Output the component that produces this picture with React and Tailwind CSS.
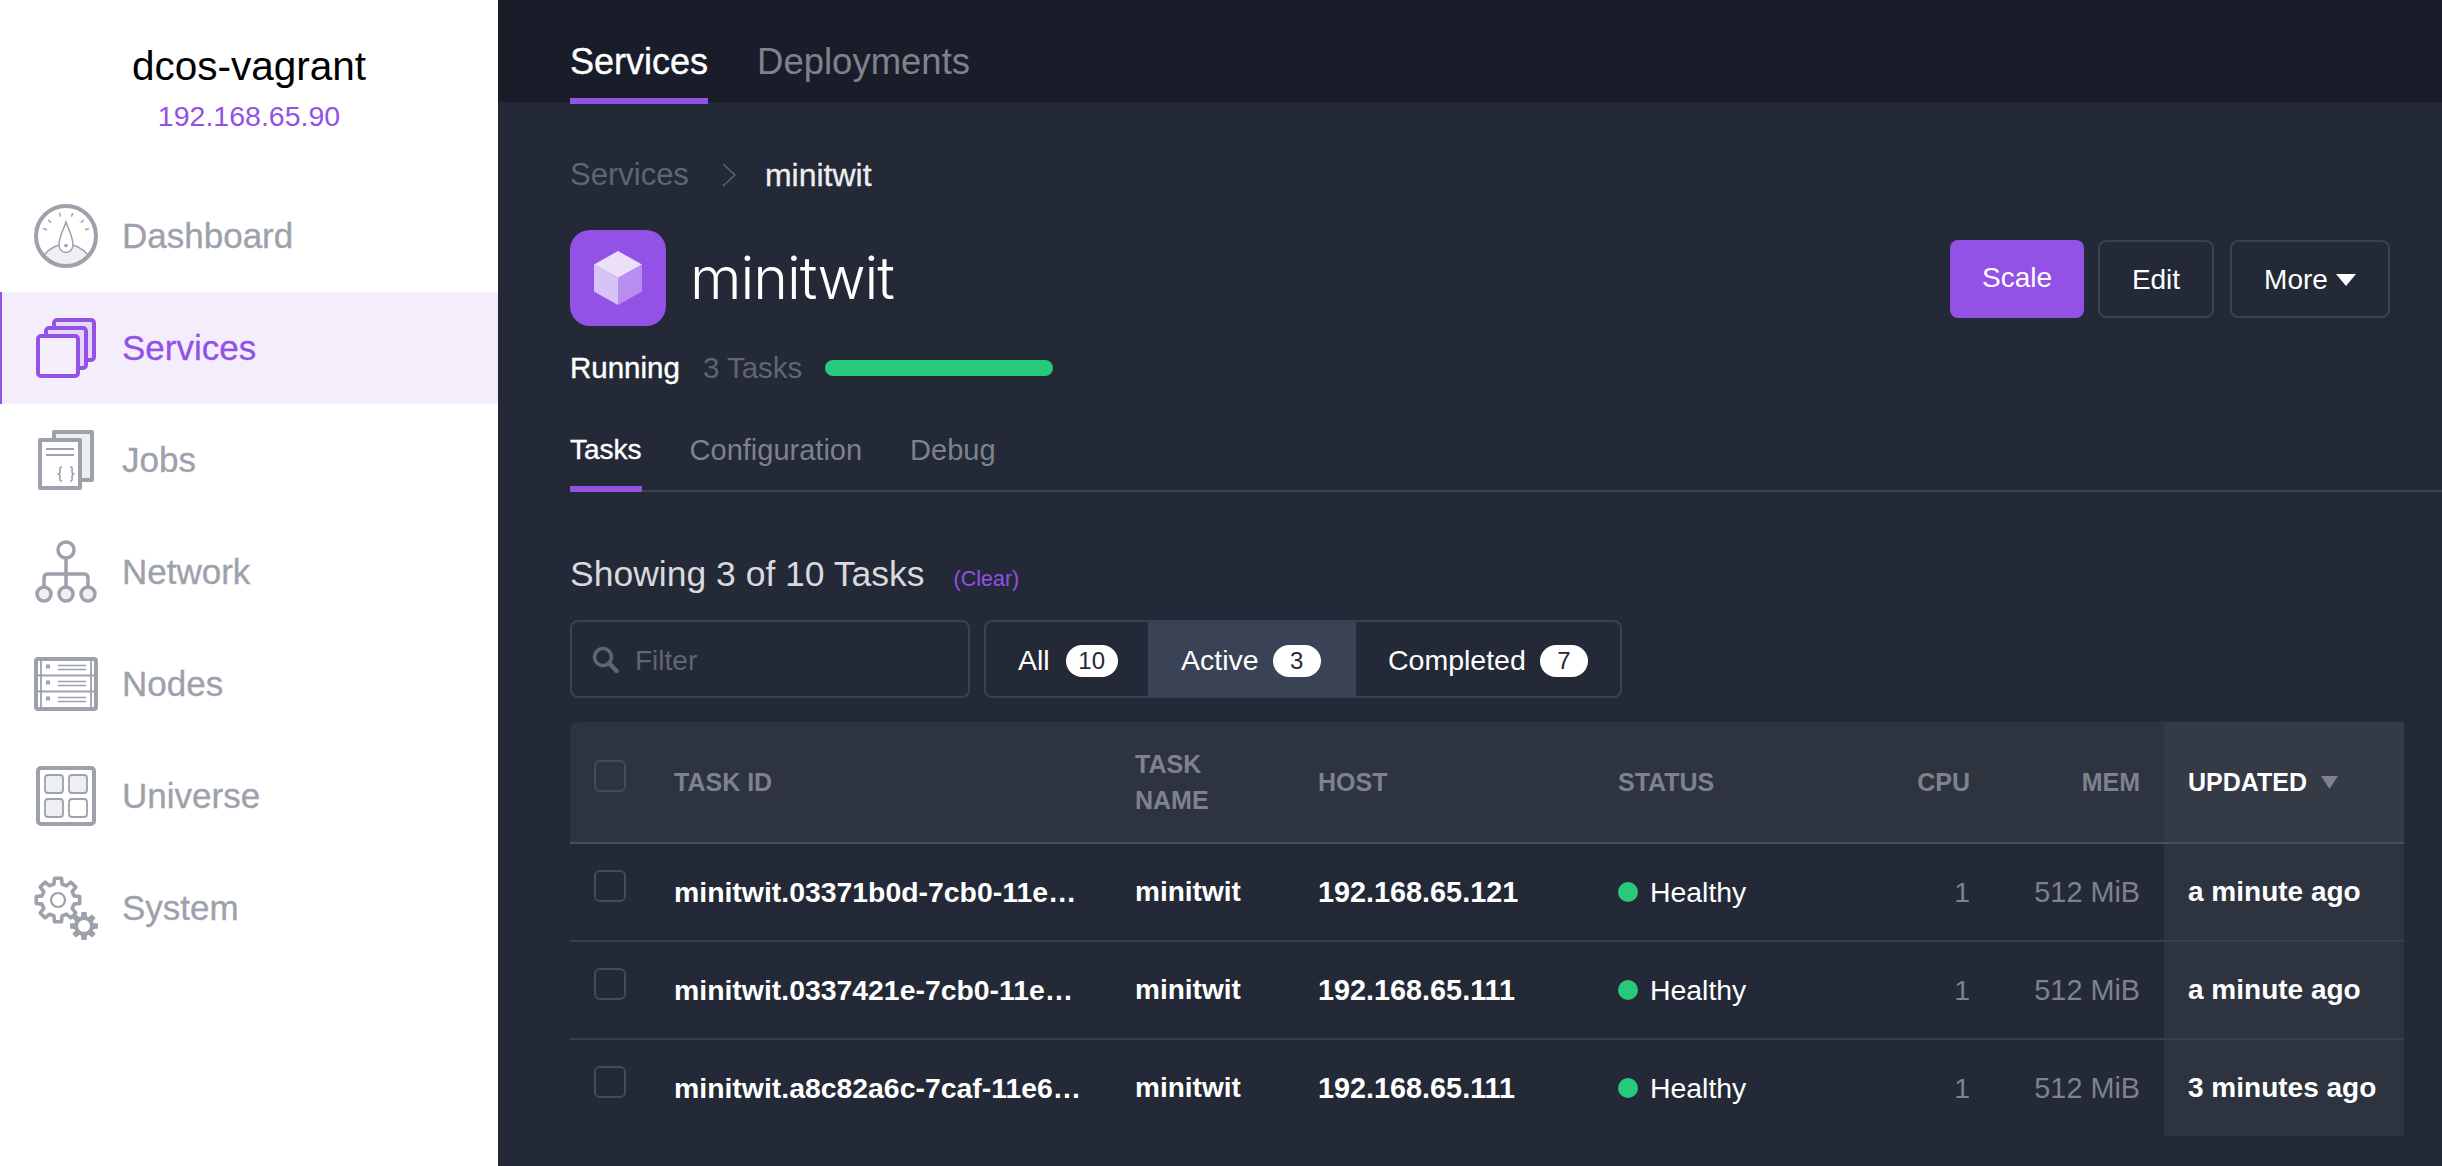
const gearPath = (cx, cy, teeth, outer, root) => {
  const step = (Math.PI * 2) / teeth
  const pts = []
  for (let i = 0; i < teeth; i++) {
    const a = i * step - Math.PI / 2
    const at = (r, d) => `${(cx + r * Math.cos(a + d * step)).toFixed(2)} ${(cy + r * Math.sin(a + d * step)).toFixed(2)}`
    pts.push(at(root, -0.32), at(outer, -0.2), at(outer, 0.2), at(root, 0.32))
  }
  return 'M' + pts.join('L') + 'Z'
}

const GRAY = '#9da1ab'
const LIGHT = '#eff0f2'
const PURPLE = '#9351e5'

function DashboardIcon() {
  const ticks = [-72, -48, -16, 16, 48, 72]
  return (
    <svg width="64" height="64" viewBox="0 0 64 64" fill="none">
      <path d="M10 51 C16 44 24 40 32 40 C40 40 48 44 54 51 A28 28 0 0 1 10 51Z" fill={LIGHT} stroke={GRAY} strokeWidth="1.5" />
      <circle cx="32" cy="32" r="30" stroke={GRAY} strokeWidth="4" />
      {ticks.map((a) => (
        <line key={a} x1="32" y1="8" x2="32" y2="12" stroke={GRAY} strokeWidth="1.5" transform={`rotate(${a} 32 32)`} />
      ))}
      <path d="M32 18 C29 27 25 33 25 41 A7 7.5 0 0 0 39 41 C39 33 35 27 32 18Z" fill="#fff" stroke={GRAY} strokeWidth="1.5" />
      <circle cx="32" cy="41.5" r="1.8" fill={GRAY} />
    </svg>
  )
}

function ServicesIcon() {
  return (
    <svg width="64" height="64" viewBox="0 0 64 64" fill="none" stroke={PURPLE} strokeWidth="4">
      <rect x="20" y="4" width="40" height="40" rx="3" fill="#e4d6f8" />
      <rect x="12" y="12" width="40" height="40" rx="3" fill="#e4d6f8" />
      <rect x="4" y="20" width="40" height="40" rx="3" fill="#f4eefc" />
    </svg>
  )
}

function JobsIcon() {
  return (
    <svg width="64" height="64" viewBox="0 0 64 64" fill="none" stroke={GRAY} strokeLinejoin="round">
      <rect x="20" y="4" width="38" height="48" strokeWidth="4" fill="#eceef0" />
      <rect x="6" y="12" width="40" height="48" strokeWidth="4" fill="#fff" />
      <path d="M12 21H40M12 27H40" strokeWidth="1.8" />
      <path d="M28 39C25 39 26 41 26 43C26 45 25 46 24 46C25 46 26 47 26 49C26 51 25 53 28 53M36 39C39 39 38 41 38 43C38 45 39 46 40 46C39 46 38 47 38 49C38 51 39 53 36 53" strokeWidth="1.6" />
    </svg>
  )
}

function NetworkIcon() {
  return (
    <svg width="64" height="64" viewBox="0 0 64 64" fill="none" stroke={GRAY} strokeWidth="3.5">
      <circle cx="32" cy="10" r="8" />
      <path d="M32 18V46M10 47V38Q10 34 14 34H50Q54 34 54 38V47" />
      <circle cx="10" cy="54" r="7" fill={LIGHT} />
      <circle cx="32" cy="54" r="7" fill={LIGHT} />
      <circle cx="54" cy="54" r="7" fill={LIGHT} />
    </svg>
  )
}

function NodesIcon() {
  return (
    <svg width="64" height="64" viewBox="0 0 64 64" fill="none" stroke={GRAY}>
      <rect x="2" y="7" width="60" height="50" rx="2" strokeWidth="4" fill="#fff" />
      <path d="M7 7V57M57 7V57M4 23.5H60M4 39.5H60" strokeWidth="1.8" />
      {[0, 16, 32].map((dy) => (
        <g key={dy}>
          <rect x="12" y={12.5 + dy} width="4" height="4" fill={GRAY} stroke="none" />
          <path d={`M24 ${13.5 + dy}H52M24 ${17.5 + dy}H52`} strokeWidth="1.6" />
        </g>
      ))}
    </svg>
  )
}

function UniverseIcon() {
  return (
    <svg width="64" height="64" viewBox="0 0 64 64" fill="none" stroke={GRAY}>
      <rect x="4" y="4" width="56" height="56" rx="3" strokeWidth="4" fill="#fff" />
      <rect x="11" y="11" width="18" height="18" rx="3" strokeWidth="1.8" fill={LIGHT} />
      <rect x="35" y="11" width="18" height="18" rx="3" strokeWidth="1.8" fill={LIGHT} />
      <rect x="11" y="35" width="18" height="18" rx="3" strokeWidth="1.8" fill={LIGHT} />
      <rect x="35" y="35" width="18" height="18" rx="3" strokeWidth="1.8" fill="#fff" />
    </svg>
  )
}

function SystemIcon() {
  return (
    <svg width="64" height="64" viewBox="0 0 64 64" fill="none" stroke={GRAY}>
      <path d={gearPath(24, 24, 8, 22, 16.5)} strokeWidth="3.6" strokeLinejoin="round" fill="#fff" />
      <circle cx="24" cy="24" r="7" strokeWidth="2.2" />
      <path d={gearPath(50, 50, 8, 13.5, 9.5)} strokeWidth="1.2" strokeLinejoin="round" fill={GRAY} />
      <circle cx="50" cy="50" r="6" fill="#fff" stroke="none" />
    </svg>
  )
}

const navItems = [
  { label: 'Dashboard', Icon: DashboardIcon },
  { label: 'Services', Icon: ServicesIcon, active: true },
  { label: 'Jobs', Icon: JobsIcon },
  { label: 'Network', Icon: NetworkIcon },
  { label: 'Nodes', Icon: NodesIcon },
  { label: 'Universe', Icon: UniverseIcon },
  { label: 'System', Icon: SystemIcon },
]

const tasks = [
  { id: 'minitwit.03371b0d-7cb0-11e…', host: '192.168.65.121', updated: 'a minute ago' },
  { id: 'minitwit.0337421e-7cb0-11e…', host: '192.168.65.111', updated: 'a minute ago' },
  { id: 'minitwit.a8c82a6c-7caf-11e6…', host: '192.168.65.111', updated: '3 minutes ago' },
]

function Sidebar() {
  return (
    <aside className="w-[498px] shrink-0 bg-white">
      <div className="h-[180px] pt-[44px] text-center">
        <div className="text-[40.5px] leading-[44px] text-black">dcos-vagrant</div>
        <div className="mt-3 text-[28.5px] leading-[32px] text-[#9351e5]">192.168.65.90</div>
      </div>
      <nav>
        {navItems.map(({ label, Icon, active }) => (
          <div
            key={label}
            className={
              active
                ? 'flex h-[112px] items-center gap-[24px] border-l-2 border-[#9351e5] bg-[#f4eefc] pl-[32px] text-[#9351e5]'
                : 'flex h-[112px] items-center gap-[24px] pl-[34px] text-[#9da1ab]'
            }
          >
            <Icon />
            <span className="text-[35px] leading-[44px] [-webkit-text-stroke:0.3px]">{label}</span>
          </div>
        ))}
      </nav>
    </aside>
  )
}

function Badge({ children, className }) {
  return (
    <span className={`flex h-[32px] items-center justify-center rounded-full bg-white text-[24px] text-[#232936] ${className}`}>
      {children}
    </span>
  )
}

function TaskTable() {
  const th = 'border-b-2 border-[#4c505c] p-0 text-[25px] font-bold uppercase leading-[36px]'
  const headGray = `${th} bg-[#2e3340] text-left text-[#7e828c]`
  const headRight = `${th} bg-[#2e3340] text-right text-[#7e828c]`
  const td = 'border-[#383d4a] p-0 leading-[36px]'
  return (
    <table className="mt-6 w-[1834px] table-fixed border-separate border-spacing-0">
      <colgroup>
        <col className="w-[104px]" />
        <col className="w-[461px]" />
        <col className="w-[183px]" />
        <col className="w-[300px]" />
        <col className="w-[253px]" />
        <col className="w-[99px]" />
        <col className="w-[170px]" />
        <col className="w-[24px]" />
        <col className="w-[240px]" />
      </colgroup>
      <thead>
        <tr>
          <th className={`${headGray} h-[122px] rounded-tl-lg pl-[24px] pt-[38px] align-top`}>
            <div className="h-[32px] w-[32px] rounded-md border-2 border-[#454a59]" />
          </th>
          <th className={headGray}>Task ID</th>
          <th className={headGray}>Task<br />Name</th>
          <th className={headGray}>Host</th>
          <th className={headGray}>Status</th>
          <th className={headRight}>CPU</th>
          <th className={headRight}>Mem</th>
          <th className={headGray} />
          <th className={`${th} bg-[#353a47] pl-[24px] text-left text-white`}>
            <div className="flex items-center gap-[14px]">
              Updated
              <svg width="17" height="13" viewBox="0 0 17 13"><polygon points="0,0 17,0 8.5,13" fill="#7e828c" /></svg>
            </div>
          </th>
        </tr>
      </thead>
      <tbody>
        {tasks.map((task, i) => {
          const last = i === tasks.length - 1
          const cell = last ? td : `${td} border-b-2`
          return (
            <tr key={task.id}>
              <td className={`${cell} ${last ? 'h-[96px]' : 'h-[98px]'} pl-[24px] pt-[26px] align-top`}>
                <div className="h-[32px] w-[32px] rounded-md border-2 border-[#454a59]" />
              </td>
              <td className={`${cell} whitespace-nowrap text-[28.4px] font-bold text-white`}>{task.id}</td>
              <td className={`${cell} text-[28px] font-bold text-white`}>minitwit</td>
              <td className={`${cell} text-[28.8px] font-bold text-white`}>{task.host}</td>
              <td className={`${cell} text-[28.4px] text-white`}>
                <div className="flex items-center gap-[12px]">
                  <span className="h-[20px] w-[20px] rounded-full bg-[#27c97b]" />
                  Healthy
                </div>
              </td>
              <td className={`${cell} text-right text-[28.4px] text-[#7e828c]`}>1</td>
              <td className={`${cell} whitespace-nowrap text-right text-[28.8px] text-[#7e828c]`}>512 MiB</td>
              <td className={cell} />
              <td className={`${cell} whitespace-nowrap bg-[#2e3340] pl-[24px] text-[28px] font-bold text-white`}>{task.updated}</td>
            </tr>
          )
        })}
      </tbody>
    </table>
  )
}

function Main() {
  return (
    <main className="min-w-0 flex-1 bg-[#232936] pl-[72px]">
      <div className="-ml-[72px] flex h-[102px] gap-[49px] bg-[#191d29] pl-[72px]">
        <div className="h-[104px] border-b-[6px] border-[#9351e5] pt-[40px] text-[36px] leading-[44px] text-white [-webkit-text-stroke:0.4px]">Services</div>
        <div className="pt-[40px] text-[36.5px] leading-[44px] text-[#7e828c]">Deployments</div>
      </div>

      <div className="flex items-center pt-[55px] leading-[36px]">
        <span className="text-[31px] text-[#5f6573]">Services</span>
        <svg className="ml-[33px]" width="14" height="24" viewBox="0 0 14 24" fill="none" stroke="#5f6573" strokeWidth="1.5">
          <path d="M1 1L13 12L1 23" />
        </svg>
        <span className="ml-[29px] text-[32px] text-[#eceef0] [-webkit-text-stroke:0.3px]">minitwit</span>
      </div>

      <div className="mt-[37px] flex items-start justify-between pr-[52px]">
        <div className="flex items-center gap-[24px]">
          <div className="flex h-[96px] w-[96px] items-center justify-center rounded-[20px] bg-[#9351e5]">
            <svg width="48" height="54" viewBox="0 0 48 54">
              <polygon points="24,0 48,13.5 24,27 0,13.5" fill="#ebdffa" />
              <polygon points="0,13.5 24,27 24,54 0,40.5" fill="#d7c3f6" />
              <polygon points="48,13.5 24,27 24,54 48,40.5" fill="#b78def" />
            </svg>
          </div>
          <h1 className="font-['Inter'] text-[59px] font-light leading-[72px] tracking-[-1px] text-white">minitwit</h1>
        </div>
        <div className="mt-[10px] flex text-[28px] text-white">
          <button className="h-[78px] w-[134px] rounded-lg bg-[#9351e5] pb-0.5">Scale</button>
          <button className="ml-[14px] h-[78px] w-[116px] rounded-lg border-2 border-[#3a4154] pt-0.5">Edit</button>
          <button className="ml-[16px] flex h-[78px] w-[160px] items-center justify-center gap-[8px] rounded-lg border-2 border-[#3a4154] pt-0.5">
            More
            <svg width="20" height="12" viewBox="0 0 20 12"><polygon points="0,0 20,0 10,12" fill="#fff" /></svg>
          </button>
        </div>
      </div>

      <div className="mt-6 flex items-center text-[29.5px] leading-[36px]">
        <span className="text-white [-webkit-text-stroke:0.4px]">Running</span>
        <span className="ml-[23px] text-[#5f6573]">3 Tasks</span>
        <div className="ml-[23px] h-[16px] w-[228px] rounded-full bg-[#27c97b]" />
      </div>

      <div className="mt-[46px] flex h-[60px] items-start gap-[48px] border-b-2 border-[#3a4154] text-[29px] leading-[36px]">
        <div className="h-[60px] border-b-[6px] border-[#9351e5] text-[28px] text-white [-webkit-text-stroke:0.4px]">Tasks</div>
        <div className="text-[#7e828c]">Configuration</div>
        <div className="text-[#7e828c]">Debug</div>
      </div>

      <div className="mt-[60px] flex items-center">
        <span className="text-[35.5px] leading-[44px] text-[#d8dade]">Showing 3 of 10 Tasks</span>
        <span className="ml-[29px] mt-[9px] text-[21.5px] leading-[28px] text-[#9351e5]">(Clear)</span>
      </div>

      <div className="mt-[24px] flex gap-[14px]">
        <div className="flex h-[78px] w-[400px] items-center gap-[16px] rounded-lg border-2 border-[#3a4154] pl-[20px] pt-1 text-[28px] text-[#5f6573]">
          <svg className="-mt-1" width="27" height="27" viewBox="0 0 27 27" fill="none" stroke="#5f6573">
            <circle cx="11" cy="11" r="8.5" strokeWidth="3.5" />
            <path d="M17 17L24.5 25" strokeWidth="4.5" strokeLinecap="round" />
          </svg>
          Filter
        </div>
        <div className="flex h-[78px] overflow-hidden rounded-lg border-2 border-[#3a4154] text-[28.5px] text-white">
          <div className="flex w-[162px] items-center gap-[16px] pl-[32px] pt-[3px]">All<Badge className="w-[52px]">10</Badge></div>
          <div className="flex w-[208px] items-center gap-[14px] bg-[#3a4256] pl-[33px] pt-[3px]">Active<Badge className="w-[48px]">3</Badge></div>
          <div className="flex w-[264px] items-center gap-[14px] pl-[32px] pt-[3px]">Completed<Badge className="w-[48px]">7</Badge></div>
        </div>
      </div>

      <TaskTable />
    </main>
  )
}

export default function App() {
  return (
    <div className="flex h-[1166px] overflow-hidden font-['Liberation_Sans',Arial,sans-serif] bg-[#232936]">
      <Sidebar />
      <Main />
    </div>
  )
}
